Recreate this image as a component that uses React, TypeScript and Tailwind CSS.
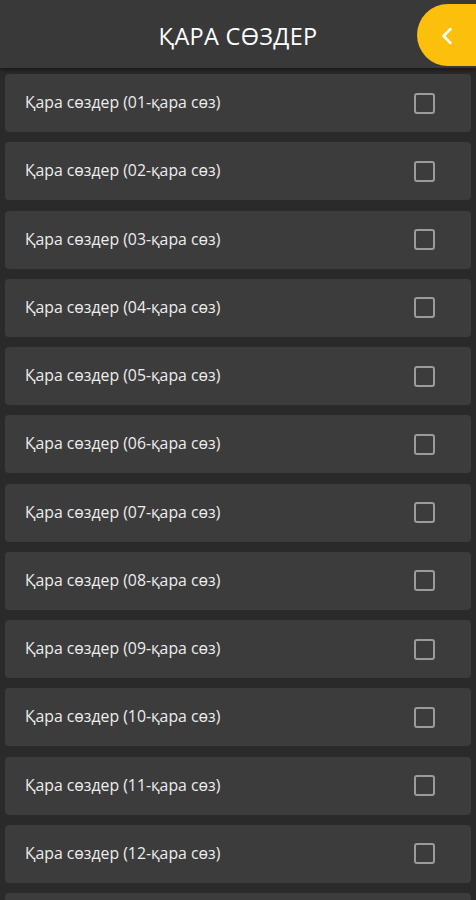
import { ChevronLeft } from 'lucide-react';

const items = Array.from({ length: 12 }, (_, i) => String(i + 1).padStart(2, '0'));

export default function App() {
  return (
    <div
      className="w-[476px] h-[900px] overflow-hidden bg-[#2a2a2a] flex flex-col"
      style={{ fontFamily: '"Open Sans", "Noto Sans", sans-serif' }}
    >
      {/* header */}
      <div className="relative h-[68px] shrink-0 bg-[#393939] shadow-[0_2px_4px_rgba(0,0,0,0.45)] z-10 flex items-center justify-center pt-[6px]">
        <h1 className="text-[23.5px] text-white font-medium tracking-[0.3px]">ҚАРА СӨЗДЕР</h1>
        <button className="absolute left-[417px] top-[4px] w-[80px] h-[62px] rounded-l-full bg-[#fcbf0c] flex items-center pl-[16px] pt-[2px]">
          <ChevronLeft size={28} strokeWidth={2.2} className="text-white" />
        </button>
      </div>

      {/* list */}
      <div className="flex flex-col gap-[10.25px] px-[5px] pt-[6px]">
        {items.map((n) => (
          <div
            key={n}
            className="h-[58px] shrink-0 rounded-[4px] bg-[#3c3c3c] flex items-center justify-between pl-[20px] pr-[36px]"
          >
            <span className="text-[15.8px] text-[#ededed]">Қара сөздер ({n}-қара сөз)</span>
            <span className="w-[21px] h-[21px] rounded-[3px] border-2 border-[#9b9b9b]" />
          </div>
        ))}
        <div className="h-[58px] shrink-0 rounded-[4px] bg-[#3c3c3c]" />
      </div>
    </div>
  );
}
